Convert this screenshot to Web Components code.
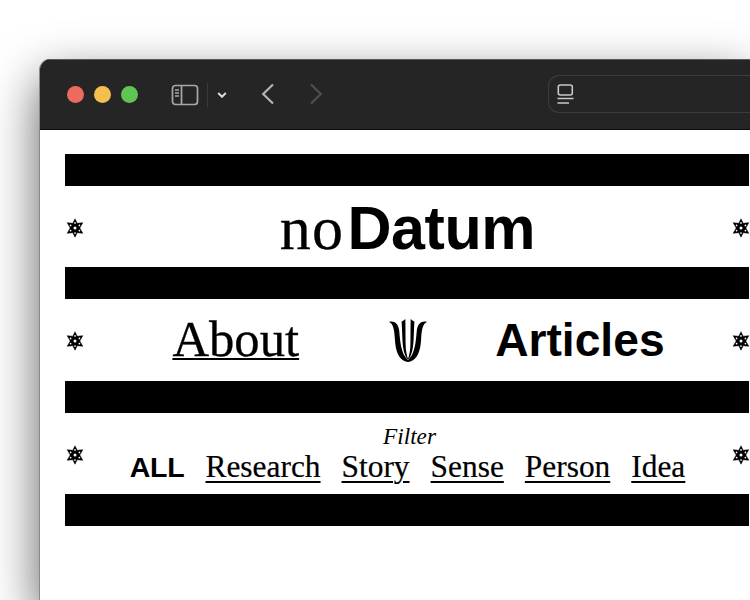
<!doctype html>
<html lang="en"><head><meta charset="utf-8"><title>noDatum</title>
<style>
html,body{margin:0;height:600px;overflow:hidden;background:#fff}
body{font-family:"Liberation Serif",serif;padding:59px 0 0 40px;box-sizing:border-box}
</style></head><body>
<browser-window>
  <black-bar></black-bar>
  <band-row height="81">
    <h-title><span slot="light">no</span><span slot="bold">Datum</span></h-title>
  </band-row>
  <black-bar></black-bar>
  <band-row height="82"><main-nav></main-nav></band-row>
  <black-bar></black-bar>
  <band-row height="81"><filter-nav></filter-nav></band-row>
  <black-bar></black-bar>
</browser-window>
<script>
const el=(name,html,fn)=>customElements.define(name,class extends HTMLElement{
  constructor(){super();this.attachShadow({mode:'open'}).innerHTML=html;}
  connectedCallback(){fn&&fn(this)}
});
const STAR=`<svg width="19" height="20" viewBox="-1 0 19 20" aria-hidden="true"><path fill="#000" stroke="#000" stroke-width=".5" d="M9 .8 11.200 5.300 16.800 4.700 13.800 10 16.800 15.300 11.200 14.700 9 19.200 6.800 14.700 1.200 15.300 4.200 10 1.200 4.700 6.800 5.300Z"/><g fill="#fff"><circle cx="9" cy="10" r="1.500"/><circle cx="9" cy="4.900" r=".85"/><circle cx="9" cy="15.100" r=".85"/><circle cx="4.600" cy="7.400" r=".85"/><circle cx="13.400" cy="7.400" r=".85"/><circle cx="4.600" cy="12.600" r=".85"/><circle cx="13.400" cy="12.600" r=".85"/></g></svg>`;
el('title-bar',`<style>
:host{display:flex;align-items:center;height:71px;background:#252525;box-shadow:inset 0 2px 0 -1px #5a5a5a,inset 0 -1px 0 #0c0c0c;padding:0 0 0 27px;box-sizing:border-box;flex:none}
.d{width:17px;height:17px;border-radius:50%;margin-right:10px;flex:none}
svg{display:block;flex:none}
.up{margin-bottom:2px}
.addr{margin-left:225px;flex:1;height:36px;border:1.5px solid #3c3c3c;border-right:0;border-radius:11px 0 0 11px;display:flex;align-items:center;padding-left:8px;margin-bottom:1px}
</style>
<span class="d" style="background:#ec6a5e"></span><span class="d" style="background:#f4bf4f"></span><span class="d" style="background:#61c554;margin-right:0"></span>
<svg style="margin-left:33px" width="28" height="22" viewBox="0 0 28 22"><rect x="1.500" y="1.500" width="25" height="19" rx="3" fill="none" stroke="#a8a8a8" stroke-width="1.700"/><path d="M10.500 2V20" stroke="#a8a8a8" stroke-width="1.700"/><path d="M4 6H8M4 9H8M4 12H8" stroke="#a8a8a8" stroke-width="1.300"/></svg>
<span style="width:1px;height:24px;background:#3a3a3a;margin-left:8px;flex:none"></span>
<svg style="margin-left:9px" width="10" height="8" viewBox="0 0 10 8"><path d="M1.200 2 5 5.800 8.800 2" fill="none" stroke="#d8d8d8" stroke-width="2"/></svg>
<svg class="up" style="margin-left:34px" width="14" height="22" viewBox="0 0 14 22"><path d="M12 1.500 2.200 11 12 20.500" fill="none" stroke="#b4b4b4" stroke-width="2.200"/></svg>
<svg class="up" style="margin-left:34px" width="14" height="22" viewBox="0 0 14 22"><path d="M2 1.500 11.800 11 2 20.500" fill="none" stroke="#4f4f4f" stroke-width="2.200"/></svg>
<div class="addr"><svg width="18" height="21" viewBox="0 0 18 21"><rect x="1.300" y="1" width="14" height="10" rx="2" fill="none" stroke="#c8c8c8" stroke-width="1.600"/><path d="M.5 14.500H16.500M.5 19H12" stroke="#c8c8c8" stroke-width="1.600"/></svg></div>`);
el('browser-window',`<style>
:host{display:block;width:710px;height:541px;border-radius:11px 0 0 0;background:#fff;box-shadow:-1px 0 0 #8a8a8a,0 20px 50px rgba(0,0,0,.66)}
.clip{display:flex;flex-direction:column;height:100%;border-radius:11px 0 0 0;overflow:hidden}
.page{padding:24px 0 0 25px;background:#fff;display:flex;flex-direction:column;flex:1}
</style><div class="clip"><title-bar></title-bar><div class="page"><slot></slot></div></div>`);
el('black-bar',`<style>:host{display:block;height:32px;background:#000;flex:none;margin-right:1px}</style>`);
el('band-row',`<style>
:host{display:grid;grid-template-columns:19px 1fr 19px;align-items:center;flex:none}
.s{display:flex;align-items:center;justify-content:center;padding-top:2px}
svg{display:block}
.m{display:flex;justify-content:center;min-width:0}
</style><div class="s">${STAR}</div><div class="m"><slot></slot></div><div class="s">${STAR}</div>`,
h=>{h.style.height=h.getAttribute('height')+'px'});
el('h-title',`<style>
:host{display:flex;align-items:baseline;line-height:66px;color:#000;padding-top:2px}
.l{font:62px/66px "Liberation Serif",serif;letter-spacing:1.300px;-webkit-text-stroke:.3px #000}
.b{font:700 61px/66px "Liberation Sans",sans-serif;letter-spacing:-.4px;margin-left:3px}
</style><span class="l"><slot name="light"></slot></span><span class="b"><slot name="bold"></slot></span>`);
el('main-nav',`<style>
:host{display:flex;align-items:baseline;color:#000;padding:0 0 2px 22px}
a{color:inherit;font:50.700px/56px "Liberation Serif",serif;text-decoration:underline;text-decoration-thickness:2px;text-underline-offset:2px;-webkit-text-stroke:.3px #000}
b{font:700 46.200px/56px "Liberation Sans",sans-serif}
svg{display:block;margin:0 68px 0 90px;align-self:center;position:relative;top:1px}
</style><a href="#">About</a>
<svg width="38" height="43" viewBox="0 0 39 44" preserveAspectRatio="none" aria-hidden="true"><defs><g id="h"><path d="M0 3C5 1.500 9.500 4 10.500 12C11.500 24 12.500 36 19.500 42L19.500 44L17 43.500C9.500 41 6.500 32 6 20C5.500 10 4 4.500 0 3Z"/><path d="M13 2.500C14.500 2 15.500 1.200 16.800 0L17 24C17 31 18 37 19.500 41L18.500 41C15.500 36 14.200 30 13.800 22Z"/></g></defs><g fill="#000"><use href="#h"/><use href="#h" transform="matrix(-1 0 0 1 39 0)"/></g></svg>
<b>Articles</b>`);
el('filter-nav',`<style>
:host{display:flex;flex-direction:column;align-items:center;color:#000}
i{font:italic 23.300px/24px "Liberation Serif",serif;display:block;margin:1px 0 0 4px}
.r{display:flex;align-items:baseline;gap:21px;height:36px;margin-top:1px}
b{font:700 28.500px/36px "Liberation Sans",sans-serif;letter-spacing:-.2px}
a{color:inherit;font:31.400px/36px "Liberation Serif",serif;text-decoration:underline;text-decoration-thickness:2px;text-underline-offset:4px;-webkit-text-stroke:.2px #000}
</style><i>Filter</i><div class="r"><b>ALL</b><a href="#">Research</a><a href="#">Story</a><a href="#">Sense</a><a href="#">Person</a><a href="#">Idea</a></div>`);
</script>
</body></html>
